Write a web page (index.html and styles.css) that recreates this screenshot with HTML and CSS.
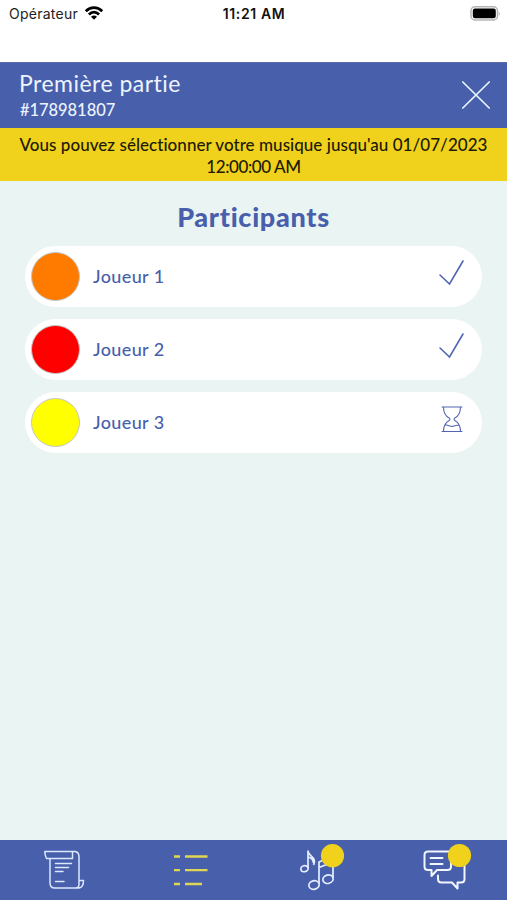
FILE: index.html
```html
<!DOCTYPE html>
<html lang="fr">
<head>
<meta charset="utf-8">
<title>Première partie</title>
<link rel="stylesheet" href="styles.css">
</head>
<body>
<div class="status">
  <div class="carrier"><span>Opérateur</span>
    <svg width="20" height="16" viewBox="0 0 20 16"><g fill="none" stroke="#000" stroke-width="2.800"><path d="M1.800 6.200C6.500 1.500 13.500 1.500 18.200 6.200"/><path d="M4.900 9.400C8 6.400 12 6.400 15.100 9.400"/></g><path d="M10 14.800L7 11.800C8.700 10.200 11.300 10.200 13 11.800Z"/></svg>
  </div>
  <span class="time">11:21 AM</span>
  <svg class="battery" width="31" height="15" viewBox="0 0 31 15"><rect x="1" y=".8" width="26.500" height="13.200" rx="4" fill="#fff" stroke="#b5b5b5" stroke-width="1.500"/><rect x="2.800" y="2.600" width="23" height="9.600" rx="2.200"/><path d="M28.800 5.200q1.800 2.300 0 4.600z" fill="#aaa"/></svg>
</div>
<header class="header">
  <div>
    <h1 class="title">Première partie</h1>
    <p class="code">#178981807</p>
  </div>
  <svg width="30" height="30" viewBox="0 0 30 30"><path d="M1.800 2L28.200 28M28.200 2L1.800 28" stroke="#e9f5ff" stroke-width="1.700" stroke-linecap="round"/></svg>
</header>
<div class="notice"><p class="line-one">Vous pouvez sélectionner votre musique jusqu'au 01/07/2023</p><p class="line-two">12:00:00 AM</p></div>
<main class="main">
  <h2 class="heading">Participants</h2>
  <ul class="list">
    <li class="player"><span class="dot orange"></span><span class="name">Joueur 1</span><svg class="state" width="28" height="30" viewBox="0 0 28 30"><path d="M2 16L11.500 25L25 2"/></svg></li>
    <li class="player"><span class="dot red"></span><span class="name">Joueur 2</span><svg class="state" width="28" height="30" viewBox="0 0 28 30"><path d="M2 16L11.500 25L25 2"/></svg></li>
    <li class="player"><span class="dot yellow"></span><span class="name">Joueur 3</span><svg class="state thin" width="28" height="30" viewBox="0 0 28 30"><path d="M4 2H24M4 26.500H24M5.500 2C5.500 8.500 8 11.500 11.500 13.200Q12.500 14.200 11.500 15.200C8 17 5.500 20 5.500 26.500M22.500 2C22.500 8.500 20 11.500 16.500 13.200Q15.500 14.200 16.500 15.200C20 17 22.500 20 22.500 26.500M7 20.300C10 19 12 22.300 15 21.300S19 20 21 20.300"/></svg></li>
  </ul>
</main>
<nav class="tabs">
  <a class="tab first"><svg width="44" height="44" viewBox="0 0 44 44"><g fill="none" stroke="#dce8ff" stroke-width="1.500" stroke-linejoin="round" stroke-linecap="round"><path d="M8 13.500H4.500Q2.800 10 2.800 6.500H33Q37 7 37 12V35.500M30.500 6.500V13.500H8V38Q8 42.500 12 43H37Q41.500 42.500 41.500 35.500H37V39Q37 43 33.500 43M13.500 18.500H29.500M13.500 22.500H26.500M13.500 26.500H21M13.500 36.500H22"/></g></svg></a>
  <a class="tab"><svg width="44" height="44" viewBox="0 0 44 44"><path d="M5 11.500H11M16 11.500H38.500M5 25.200H11M16 25.200H38.500M5 39H11M16 39H33" stroke="#dfd653" stroke-width="2.300"/></svg></a>
  <a class="tab third"><svg width="44" height="44" viewBox="0 0 44 44"><g fill="none" stroke="#e5efff" stroke-width="1.700" stroke-linejoin="round"><ellipse cx="7.500" cy="23.700" rx="3.700" ry="3" transform="rotate(-15 7.500 23.700)"/><path d="M11 23.500V6C11.500 11.500 20.500 12.500 16.500 20M11 12Q16 13 16.500 18"/><ellipse cx="17" cy="40" rx="5.200" ry="4.200" transform="rotate(-15 17 40)"/><ellipse cx="31" cy="34.200" rx="5.200" ry="4.200" transform="rotate(-15 31 34.200)"/><path d="M22 39V17L36 11V33M22 22.500L36 17"/></g><circle cx="35.500" cy="10.700" r="11.600" fill="#f0d11c"/></svg></a>
  <a class="tab last"><svg width="50" height="44" viewBox="0 0 50 44"><g fill="none" stroke="#f2f6ff" stroke-width="2" stroke-linejoin="round" stroke-linecap="round"><path d="M29 15V21.500Q29 25 25.500 25H15L9.500 31V25H6Q2.500 25 2.500 21.500V10Q2.500 6.500 6 6.500H29M8.500 13H20.500M8.500 19H20.500M16 30.500V34Q16 37.500 19.500 37.500H30L35.500 43.500V37.500H39Q42.500 37.500 42.500 34V20"/></g><circle cx="37.500" cy="10.500" r="11.600" fill="#f0d11c"/></svg></a>
</nav>
</body>
</html>
```
FILE: styles.css
```css
* { box-sizing: border-box; margin: 0; padding: 0; }
body { display: flex; flex-direction: column; height: 900px; background: #eaf4f3; font-family: Lato, "Open Sans", sans-serif; font-weight: 500; overflow: hidden; }
svg { display: block; flex: none; overflow: visible; }
.status { display: grid; grid-template-columns: 1fr auto 1fr; align-items: start; height: 62px; padding: 5px 6px 0 9px; background: #fff; font: 400 14px/17px Inter, sans-serif; color: #222; }
.carrier { display: flex; gap: 6px; letter-spacing: .25px; }
.time { margin-right: 2px; font-weight: 600; color: #111; letter-spacing: .6px; }
.battery { justify-self: end; margin-top: 1px; }
.header { display: flex; justify-content: space-between; height: 66px; padding: 7px 16px 0 19px; background: #485fab; color: #edf4ff; border-top: 1px solid #5a6caa; }
.header svg { margin-top: 10px; }
.title { font-size: 23px; line-height: 27px; font-weight: 400; letter-spacing: .48px; white-space: nowrap; }
.code { padding-left: 1px; font-size: 16.500px; line-height: 27px; letter-spacing: -.05px; }
.notice { height: 53px; padding-top: 6px; background: #f0d11c; color: #1d1a05; text-align: center; font-size: 17px; line-height: 22px; white-space: nowrap; }
.line-one { letter-spacing: .04px; }
.line-two { letter-spacing: -.4px; }
.main { flex: 1; padding: 18px 25px 0; }
.heading { height: 47px; line-height: 36px; font-size: 27px; font-weight: 900; letter-spacing: .7px; text-align: center; color: #485fab; }
.list { display: flex; flex-direction: column; gap: 12.200px; list-style: none; }
.player { display: flex; align-items: center; height: 61px; padding: 0 16px 0 6px; border-radius: 31px; background: #fff; }
.dot { width: 49px; height: 49px; border-radius: 50%; border: 1px solid #c5c5c5; }
.orange { background: #ff7b00; }
.red { background: #f00; }
.yellow { background: #ff0; }
.name { flex: 1; margin: -2px 0 0 13px; font-size: 18px; letter-spacing: .38px; color: #485fab; }
.state { margin-top: -6px; fill: none; stroke: #5265b0; stroke-width: 1.600; stroke-linecap: round; }
.thin { stroke-width: 1.100; }
.tabs { display: grid; grid-template-columns: repeat(4, 1fr); height: 60px; padding: 5px 0 0 2px; background: #485fab; }
.tab { display: flex; justify-content: center; }
.first { padding-right: 2px; }
.third { padding-left: 3px; }
.last { padding-left: 6px; }
```
